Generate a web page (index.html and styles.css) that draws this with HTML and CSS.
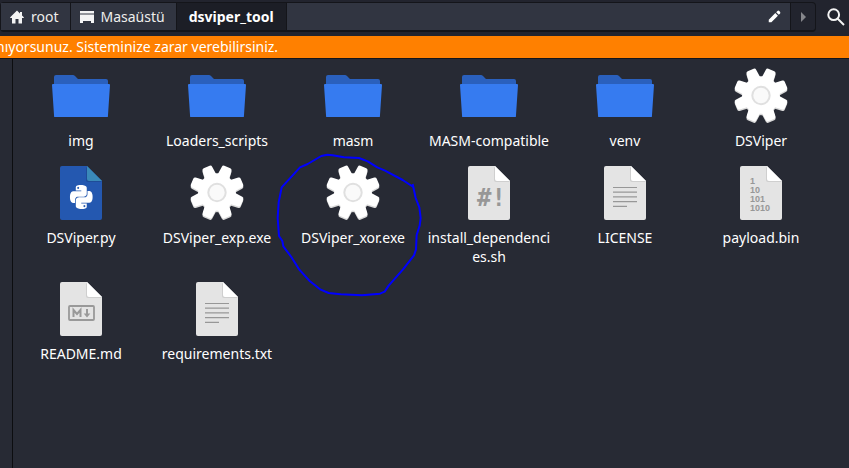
FILE: index.html
```html
<!DOCTYPE html>
<html lang="tr">
<head>
<meta charset="utf-8">
<title>dsviper_tool</title>
<link rel="stylesheet" href="styles.css">
</head>
<body>
<svg class="defs" aria-hidden="true">
  <symbol id="folder" viewBox="0 0 64 64">
    <path fill="#2a60bd" d="M5 24V13q0-2 2-2h17q1 0 2 1l3 3h28q2 0 2 2v7z"/>
    <path fill="#2a60bd" d="M5 20h54v33H5z"/>
    <path fill="#367bf0" d="M4 20h56q1 0 1 1l-2 30q0 2-1 2H6q-1 0-1-2L3 21q0-1 1-1z"/>
  </symbol>
  <symbol id="page" viewBox="0 0 64 64">
    <path fill="#e4e4e4" d="M13 5h25l15 15v37q0 2-2 2H13q-2 0-2-2V7q0-2 2-2z"/>
    <path fill="#cfcfcf" d="M37 6v13q0 2 2 2h14z"/>
    <path fill="#fff" d="M38 5v13q0 2 2 2h13z"/>
  </symbol>
  <symbol id="text" viewBox="0 0 64 64">
    <use href="#page"/>
    <path stroke="#979797" stroke-width="1.2" d="M20 26.500h24M20 31.200h24M20 35.900h24M20 40.600h24M20 45.300h14"/>
  </symbol>
  <symbol id="markdown" viewBox="0 0 64 64">
    <use href="#page"/>
    <rect x="20" y="29" width="25" height="14" rx="1" fill="none" stroke="#999" stroke-width="1.8"/>
    <path fill="none" stroke="#999" stroke-width="2" d="M24.500 40v-7l3.500 4 3.500-4v7"/>
    <path fill="#999" d="M37 32h2v4.500h2.300L38 40.500l-3.300-4H37z"/>
  </symbol>
  <symbol id="python" viewBox="0 0 64 64">
    <path fill="#2458b0" d="M13 5h25l15 15v37q0 2-2 2H13q-2 0-2-2V7q0-2 2-2z"/>
    <path fill="#1f4c98" d="M37 6v13q0 2 2 2h14z"/>
    <path fill="#3a8ab9" d="M38 5v13q0 2 2 2h13z"/>
    <path fill="#fff" transform="translate(21 24) scale(.94 1)" d="M14.25.18l.9.2.73.26.59.3.45.32.34.34.25.34.16.33.1.3.04.26.02.2-.01.13V8.5l-.05.63-.13.55-.21.46-.26.38-.3.31-.33.25-.35.19-.35.14-.33.1-.3.07-.26.04-.21.02H8.77l-.69.05-.59.14-.5.22-.41.27-.33.32-.27.35-.2.36-.15.37-.1.35-.07.32-.04.27-.02.21v3.060H3.170l-.21-.03-.28-.07-.32-.12-.35-.18-.36-.26-.36-.36-.35-.46-.32-.59-.28-.73-.21-.88-.14-1.050-.05-1.230.06-1.220.16-1.040.24-.87.32-.71.36-.57.4-.44.42-.33.42-.24.4-.16.36-.1.32-.05.24-.01h.16l.06.01h8.160v-.83H6.180l-.01-2.750-.02-.37.05-.34.11-.31.17-.28.25-.26.31-.23.38-.2.44-.18.51-.15.58-.12.64-.1.71-.06.77-.04.84-.02 1.270.05zm-6.300 1.980l-.23.33-.08.41.08.41.23.34.33.22.41.09.41-.09.33-.22.23-.34.08-.41-.08-.41-.23-.33-.33-.22-.41-.09-.41.09zm13.090 3.950l.28.06.32.12.35.18.36.27.36.35.35.47.32.59.28.73.21.88.14 1.040.05 1.230-.06 1.230-.16 1.040-.24.86-.32.71-.36.57-.4.45-.42.33-.42.24-.4.16-.36.09-.32.05-.24.02-.16-.01h-8.220v.82h5.840l.01 2.760.02.36-.05.34-.11.31-.17.29-.25.25-.31.24-.38.2-.44.17-.51.15-.58.13-.64.09-.71.07-.77.04-.84.01-1.270-.04-1.070-.14-.9-.2-.73-.25-.59-.3-.45-.33-.34-.34-.25-.34-.16-.33-.1-.3-.04-.25-.02-.2.01-.13v-5.340l.05-.64.13-.54.21-.46.26-.38.3-.32.33-.24.35-.2.35-.14.33-.1.3-.06.26-.04.21-.02.13-.01h5.840l.69-.05.59-.14.5-.21.41-.28.33-.32.27-.35.2-.36.15-.36.1-.35.07-.32.04-.28.02-.21V6.070h2.090l.14.01zm-6.470 14.250l-.23.33-.08.41.08.41.23.33.33.23.41.08.41-.08.33-.23.23-.33.08-.41-.08-.41-.23-.33-.33-.23-.41-.08-.41.08z"/>
  </symbol>
  <g id="tooth2"><path id="tooth" stroke-width="4" stroke-linejoin="round" d="M-4.200-15L-3.200-25H3.200L4.200-15z"/><use href="#tooth" transform="rotate(45)"/></g>
  <g id="wheel">
    <g transform="rotate(22.5)"><circle r="18.800" stroke="none"/><use href="#tooth2"/><use href="#tooth2" transform="rotate(90)"/><use href="#tooth2" transform="rotate(180)"/><use href="#tooth2" transform="rotate(270)"/></g>
  </g>
  <symbol id="gear" viewBox="0 0 64 64">
    <use href="#wheel" transform="translate(32 32.5)" fill="#d9d9d9" stroke="#d9d9d9"/>
    <use href="#wheel" transform="translate(32 31)" fill="#fff" stroke="#fff"/>
    <circle cx="32" cy="31.500" r="8.700" fill="#fafafa" stroke="#e0e0e0" stroke-width="2"/>
  </symbol>
</svg>

<header class="toolbar">
  <nav class="path" aria-label="Konum">
    <a class="crumb" href="#"><svg viewBox="0 0 16 16"><path d="M8 1.500L1.200 8.300V9H3v5.500h3.500V10h3v4.500H13V9h1.800v-.7L13 6.500V3h-2v1.500z"/></svg>root</a>
    <a class="crumb" href="#"><svg viewBox="0 0 16 16"><path d="M1 2h14v2.500H1zM1 5.500h14V14h-3v-2H4v2H1z"/></svg>Masaüstü</a>
    <a class="crumb current" href="#" aria-current="page">dsviper_tool</a>
    <button class="edit" aria-label="Konumu düzenle"><svg viewBox="0 0 16 16"><path d="M2 14v-3l7.500-7.500 3 3L5 14zM10.500 2.500L12 1q1-.7 2 .2l.8.8q.9 1 .2 2l-1.500 1.500z"/></svg></button>
    <button class="next" aria-label="İleri"><svg viewBox="0 0 16 16"><path d="M6 3l5 5-5 5z"/></svg></button>
  </nav>
  <button class="search" aria-label="Ara"><svg viewBox="0 0 18 18"><circle cx="6.700" cy="6.700" r="5.400"/><path d="M10.500 10.500l6.500 6.500"/></svg></button>
</header>
<p class="warning">nıyorsunuz. Sisteminize zarar verebilirsiniz.</p>
<div class="body">
  <aside class="sidebar"></aside>
  <main>
    <ul class="files">
      <li><svg class="icon"><use href="#folder"/></svg><span>img</span></li>
      <li><svg class="icon"><use href="#folder"/></svg><span>Loaders_scripts</span></li>
      <li><svg class="icon"><use href="#folder"/></svg><span>masm</span></li>
      <li><svg class="icon"><use href="#folder"/></svg><span>MASM-compatible</span></li>
      <li><svg class="icon"><use href="#folder"/></svg><span>venv</span></li>
      <li><svg class="icon"><use href="#gear"/></svg><span>DSViper</span></li>
      <li><svg class="icon"><use href="#python"/></svg><span>DSViper.py</span></li>
      <li><svg class="icon"><use href="#gear"/></svg><span>DSViper_exp.exe</span></li>
      <li><svg class="icon"><use href="#gear"/></svg><span>DSViper_xor.exe</span>
        <svg class="marker" viewBox="0 0 480 480" aria-hidden="true"><path d="M428 114L430 123L398 102L345 74L322 64L293 46L267 36L222 34L188 28L172 26L154 30L113 54L90 64L35 124L26 169L23 216L27 270L37 285L40 301L64 333L88 371L120 406L152 431L176 441L212 445L276 448L330 443L344 437L356 419L399 370L432 328L438 310L440 267L449 239L452 216L448 184L437 156L428 114"/></svg></li>
      <li><svg class="icon" viewBox="0 0 64 64"><use href="#page"/><text x="20" y="45" class="hash">#!</text></svg><span>install_dependencies.sh</span></li>
      <li><svg class="icon"><use href="#text"/></svg><span>LICENSE</span></li>
      <li><svg class="icon" viewBox="0 0 64 64"><use href="#page"/><g class="bits"><text x="21" y="23">1</text><text x="21" y="32">10</text><text x="21" y="41">101</text><text x="21" y="50">1010</text></g></svg><span>payload.bin</span></li>
      <li><svg class="icon"><use href="#markdown"/></svg><span>README.md</span></li>
      <li><svg class="icon"><use href="#text"/></svg><span>requirements.txt</span></li>
    </ul>
  </main>
</div>
</body>
</html>
```
FILE: styles.css
```css
* { box-sizing: border-box; }
body {
  margin: 0;
  min-height: 100vh;
  display: flex;
  flex-direction: column;
  background: #272a34;
  color: #fff;
  font: 14px/19px "Noto Sans", sans-serif;
}
.defs { position: absolute; width: 0; height: 0; }
button { padding: 0; border: 0; background: none; color: inherit; font: inherit; }

.toolbar {
  display: flex;
  height: 36px;
  padding: 2px 4px 4px 0;
  background: #22242e;
}
.path {
  flex: 1;
  display: flex;
  border: 1px solid #14151a;
  border-bottom-width: 2px;
  border-radius: 4px;
}
.crumb {
  display: flex;
  align-items: center;
  gap: 6px;
  padding: 0 11px 0 8px;
  border-right: 1px solid #14151a;
  background: #313541;
  color: #eeeeec;
  text-decoration: none;
}
.crumb svg { width: 16px; height: 16px; fill: #f4f4f4; }
.crumb.current { padding: 0 12px; background: #1c1e26; color: #fff; font-weight: bold; }
.edit {
  flex: 1;
  display: flex;
  align-items: center;
  justify-content: flex-end;
  padding-right: 9px;
  background: #313541;
  border-right: 1px solid #14151a;
}
.edit svg { width: 14px; height: 14px; fill: #fff; }
.next { display: flex; align-items: center; justify-content: center; width: 24px; }
.next svg { width: 16px; height: 16px; fill: #85868b; }
.search { display: flex; align-items: center; padding-left: 11px; }
.search svg { width: 18px; height: 18px; fill: none; stroke: #f4f4f4; stroke-width: 2; }

.warning {
  margin: 0;
  height: 23px;
  padding: 1px 0;
  border-bottom: 1px solid #14151a;
  background: #ff8000;
  text-indent: -4px;
  white-space: nowrap;
  overflow: hidden;
}
.body { flex: 1; display: flex; }
.sidebar { width: 13px; border-right: 1px solid #0c0d10; }
main { flex: 1; padding-top: 5px; }
.files {
  display: grid;
  grid-template-columns: repeat(auto-fill, 136px);
  row-gap: 11px;
  margin: 0;
  padding: 0;
  list-style: none;
}
.files li {
  position: relative;
  display: flex;
  flex-direction: column;
  align-items: center;
  text-align: center;
}
.files span { max-width: 124px; overflow-wrap: anywhere; }
.icon { width: 64px; height: 64px; margin-bottom: 3px; }
.marker {
  position: absolute;
  top: -15px;
  left: -15px;
  width: 160px;
  height: 160px;
  fill: none;
  stroke: #00f;
  stroke-width: 6;
  stroke-linejoin: round;
  pointer-events: none;
}
.hash { font: bold 24px "DejaVu Sans Mono", monospace; fill: #979797; }
.bits { font: bold 9px "Liberation Sans", sans-serif; fill: #979797; }
```
